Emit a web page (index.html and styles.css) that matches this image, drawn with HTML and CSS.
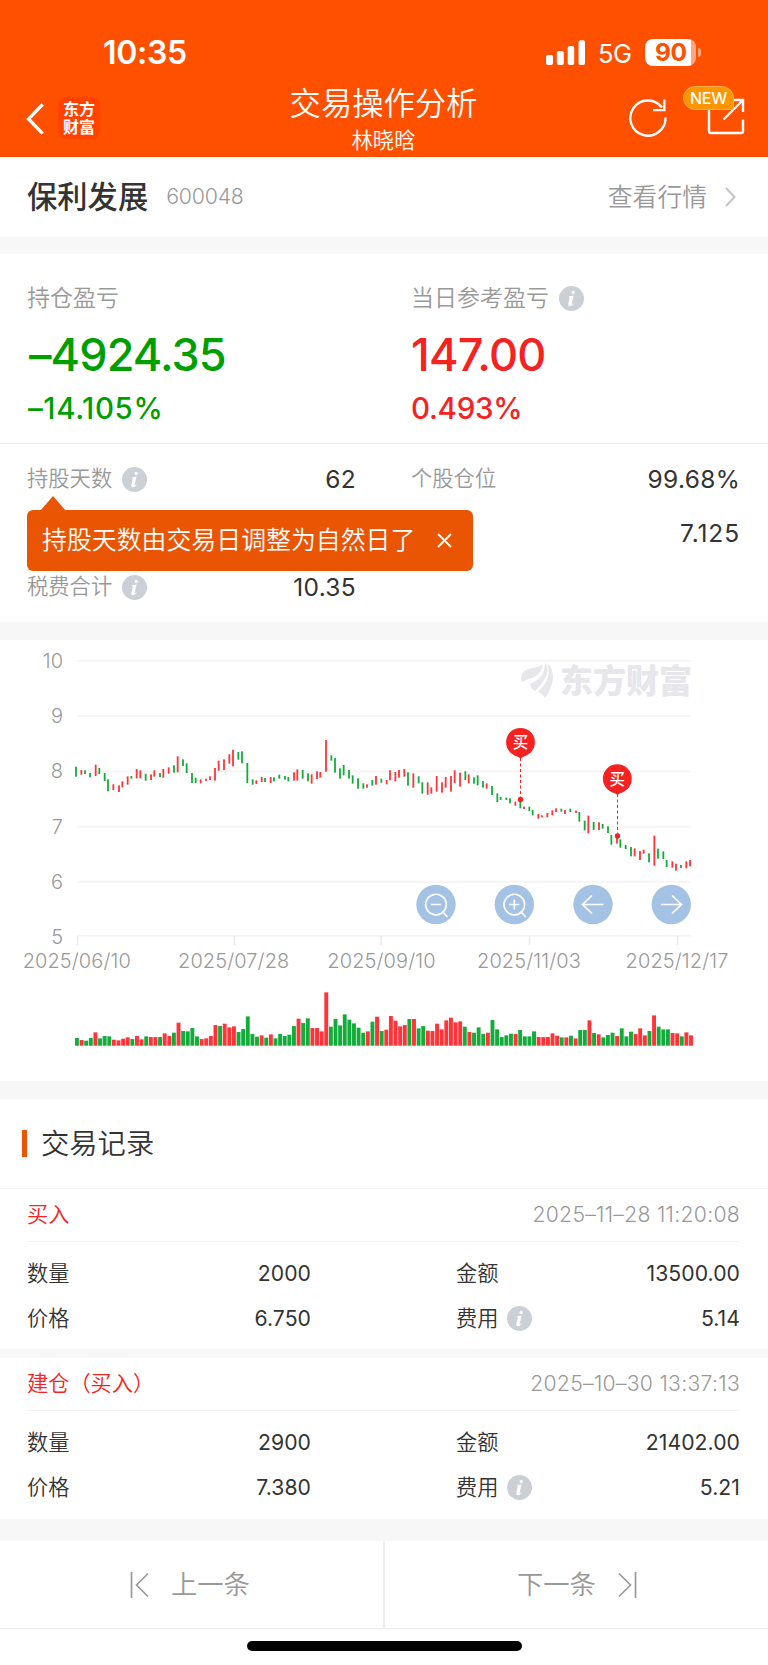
FILE: index.html
```html
<!DOCTYPE html>
<html lang="zh-CN">
<head>
<meta charset="utf-8">
<title>交易操作分析</title>
<link rel="stylesheet" href="styles.css">
</head>
<body>
<svg class="defs" aria-hidden="true">
  <symbol id="info" viewBox="0 0 25 25">
    <circle cx="12.5" cy="12.5" r="12.5" fill="#cbcfd6"/>
    <circle cx="14.2" cy="6.5" r="1.7" fill="#fff"/>
    <path d="M10.3 10.3q2-.2 4.3-.8l-2 8.5q-.3 1.300 1.600-.7l.5.5q-2 2.600-4 2.500-2-.2-1.400-2.500l1.400-5.600q.2-1-.6-1z" fill="#fff"/>
  </symbol>
</svg>
<header class="header">
  <div class="status">
    <span class="clock">10:35</span>
    <span class="status-right">
      <svg class="signal" width="39" height="25" viewBox="0 0 39 25" fill="#fff"><rect y="15" width="7" height="10" rx="2"/><rect x="10.800" y="11" width="7" height="14" rx="2"/><rect x="21.700" y="6" width="6.500" height="19" rx="2"/><rect x="32.500" y=".3" width="6.500" height="24.700" rx="2"/></svg>
      <span class="net">5G</span>
      <span class="battery"><b class="battery-level">90</b></span>
      <i class="battery-cap"></i>
    </span>
  </div>
  <div class="nav">
    <div class="nav-left">
      <svg class="back" width="18" height="32" viewBox="0 0 18 32"><path d="M15.500 2.500 2.500 16l13 13.500" fill="none" stroke="#fff" stroke-width="3.300" stroke-linecap="square"/></svg>
      <div class="brand"><span>东方</span><span>财富</span></div>
    </div>
    <div class="heading"><h1 class="heading-title">交易操作分析</h1><div class="heading-sub">林晓晗</div></div>
    <div class="nav-right">
      <svg width="40" height="40" viewBox="0 0 40 40" fill="none" stroke="#fff" stroke-width="2.400"><path d="M37.500 20.500A17.600 17.600 0 1 1 34 10.500M36.300 2.500v10.600H25"/></svg>
      <div class="share">
        <svg width="38" height="38" viewBox="0 0 38 38" fill="none" stroke="#fff" stroke-width="2.400"><path d="M2 9v24q0 2 2 2h30q2 0 2-2V21.500M26 2h10v12M36 2 16.500 21.500"/></svg>
        <span class="badge">NEW</span>
      </div>
    </div>
  </div>
</header>

<section class="stock">
  <h2 class="stock-name">保利发展</h2><span class="stock-code">600048</span>
  <span class="quote">查看行情</span>
  <svg width="13" height="22" viewBox="0 0 13 22"><path d="M2 2l8.500 9L2 20" fill="none" stroke="#c4c4c4" stroke-width="2"/></svg>
</section>

<section class="profit">
  <div class="profit-col green"><div class="label">持仓盈亏</div><div class="amount amount-hold">–4924.35</div><div class="percent percent-hold">–14.105%</div></div>
  <div class="profit-col red"><div class="label">当日参考盈亏<svg class="info"><use href="#info"/></svg></div><div class="amount">147.00</div><div class="percent">0.493%</div></div>
</section>
<section class="metrics">
  <div class="metric"><span>持股天数</span><svg class="info"><use href="#info"/></svg><b>62</b></div>
  <div class="metric"><span>个股仓位</span><b>99.68%</b></div>
  <div class="metric"></div>
  <div class="metric"><b class="cost">7.125</b></div>
  <div class="metric"><span>税费合计</span><svg class="info"><use href="#info"/></svg><b>10.35</b></div>
  <div class="tip">持股天数由交易日调整为自然日了<svg width="15" height="15" viewBox="0 0 15 15"><path d="M1 1l13 13M14 1 1 14" stroke="#fff" stroke-width="2"/></svg></div>
</section>

<section class="chart">
  <svg width="768" height="441" viewBox="0 640 768 441">
    <path class="grid" d="M77 660.700H691M77 716H691M77 771.500H691M77 826.700H691M77 881.800H691M77 935.700H691"/>
    <path class="tick" d="M77.500 936v9M234.500 936v9M381.300 936v9M529.500 936v9M677.500 936v9"/>
    <g class="axis axis-y"><text x="63" y="667.700">10</text><text x="63" y="723">9</text><text x="63" y="778.300">8</text><text x="63" y="833.500">7</text><text x="63" y="888.700">6</text><text x="63" y="943.700">5</text></g>
    <g class="axis axis-x"><text x="76.800" y="967.700">2025/06/10</text><text x="233.700" y="967.700">2025/07/28</text><text x="381.500" y="967.700">2025/09/10</text><text x="529" y="967.700">2025/11/03</text><text x="677" y="967.700">2025/12/17</text></g>
    <g class="watermark">
      <path d="M521 682q-1-12 11-14 8-1 11-4-1 10-11 14-4 1-11 4zM530 684q10-4 13-11 2-5 2-10 4 4 2 11-3 8-12 17-4-2-5-7zM538 692q9-8 10.500-17 1-6-1-11 5 3 5.500 13-.5 11-8 21-2-4-7-6z"/>
      <text x="560" y="693">东方财富</text>
    </g>
    <g id="candles"></g>
    <g id="volume"></g>
    <g class="pin"><path class="pin-line" d="M520.500 758V799"/><circle cx="520.500" cy="799.500" r="2.700"/><path d="M510.500 752 520.500 758.500 530.500 752z"/><circle cx="520.500" cy="742.300" r="14.400"/><text x="520.500" y="748">买</text></g>
    <g class="pin"><path class="pin-line" d="M617.500 794V836"/><circle cx="617.500" cy="836" r="2.700"/><path d="M607.500 788.500 617.500 795 627.500 788.500z"/><circle cx="617.300" cy="778.700" r="14.400"/><text x="617.300" y="784.500">买</text></g>
    <g class="controls">
      <circle cx="436" cy="904.500" r="19.700"/><circle cx="514.300" cy="904.500" r="19.700"/><circle cx="593" cy="904.500" r="19.700"/><circle cx="671.300" cy="904.500" r="19.700"/>
      <path d="M446.300 904.500a10.300 10.300 0 1 0-3.700 8M442.500 911.500l5 5.500M431 904.500h10M524.600 904.500a10.300 10.300 0 1 0-3.700 8M520.800 911.500l5 5.500M509.300 904.500h10M514.300 899.500v10M603.500 904.500h-20.500M592 895.500l-9.500 9 9.500 9M661 904.500h20.500M672 895.500l9.500 9-9.500 9"/>
      <path d="M446.300 904.500a10.300 10.300 0 0 1-3.700 8M524.600 904.500a10.300 10.300 0 0 1-3.700 8"/>
    </g>
  </svg>
</section>

<section class="records">
  <h3 class="records-title"><span>交易记录</span></h3>
  <article class="record">
    <div class="record-head"><span class="side">买入</span><time>2025–11–28 11:20:08</time></div>
    <div class="record-grid">
      <span>数量</span><b>2000</b><span class="second">金额</span><b>13500.00</b>
      <span>价格</span><b>6.750</b><span class="second">费用<svg class="info"><use href="#info"/></svg></span><b>5.14</b>
    </div>
  </article>
  <article class="record">
    <div class="record-head"><span class="side">建仓（买入）</span><time>2025–10–30 13:37:13</time></div>
    <div class="record-grid">
      <span>数量</span><b>2900</b><span class="second">金额</span><b>21402.00</b>
      <span>价格</span><b>7.380</b><span class="second">费用<svg class="info"><use href="#info"/></svg></span><b>5.21</b>
    </div>
  </article>
</section>

<footer class="pager">
  <div class="page-btn prev"><svg width="20" height="26" viewBox="0 0 20 26"><path d="M1.500 0v26M18 1.500 6.500 13 18 24.500"/></svg><span>上一条</span></div>
  <div class="page-btn next"><span>下一条</span><svg width="20" height="26" viewBox="0 0 20 26"><path d="M18.500 0v26M2 1.500 13.500 13 2 24.500"/></svg></div>
</footer>
<div class="home"><i></i></div>
<script src="chart.js"></script>
</body>
</html>
```
FILE: styles.css
```css
* { box-sizing: border-box; }
body { margin: 0; width: 768px; height: 1665px; background: #fff; color: #333; font-family: Inter, "Noto Sans CJK SC", sans-serif; font-weight: 350; line-height: 1; overflow: hidden; }
h1, h2, h3 { margin: 0; font-weight: inherit; }
b { font-weight: 370; }
svg { display: block; flex: none; }
.defs { position: absolute; width: 0; height: 0; }
.info { width: 25px; height: 25px; margin-left: 10px; }

.header { height: 157px; background: #ff5000; color: #fff; }
.status { height: 80px; padding: 25px 67px 0 103px; display: flex; justify-content: space-between; align-items: flex-start; }
.clock { font-size: 32px; font-weight: 600; line-height: 56px; letter-spacing: -.3px; }
.status-right { display: flex; align-items: center; height: 54px; }
.net { width: 34px; margin: 3px 13px 0 13px; font-size: 25.500px; font-weight: 400; letter-spacing: -.5px; }
.battery { width: 51px; height: 27px; border-radius: 8px; background: linear-gradient(90deg, #fff 46px, #ffa67e 46px); padding-left: 10px; }
.battery-level { color: #ff5000; font-size: 24.500px; font-weight: 700; line-height: 27px; letter-spacing: -.5px; }
.battery-cap { width: 3px; height: 9px; margin-left: 2px; border-radius: 0 4px 4px 0; background: #ffa67e; }
.nav { height: 77px; padding: 0 24px 0 26px; display: grid; grid-template-columns: 1fr auto 1fr; }
.nav-left { display: flex; gap: 14px; padding-top: 17px; }
.back { margin-top: 6px; }
.brand { width: 42px; height: 42px; border-radius: 8px; background: #ff4200; display: flex; flex-direction: column; align-items: center; justify-content: center; gap: 2px; font-size: 16px; font-weight: 700; }
.heading { text-align: center; padding-top: 8px; margin-left: -3px; }
.heading-title { font-size: 31.300px; line-height: 32px; }
.heading-sub { font-size: 21.300px; line-height: 22px; margin-top: 9px; }
.nav-right { display: flex; justify-content: flex-end; gap: 39px; padding-top: 17px; margin-right: -1px; }
.share { position: relative; padding-top: 1px; }
.badge { position: absolute; left: -24px; top: -11px; width: 51px; height: 24px; border: 1px solid #ffad4d; border-radius: 12px 12px 3px 12px; background: #ff9500; font-size: 16px; font-weight: 500; line-height: 23px; text-align: center; letter-spacing: -.3px; }

.stock { height: 80px; padding: 0 31px 0 27px; display: flex; align-items: center; }
.stock-name { font-size: 30.300px; font-weight: 500; }
.stock-code { margin-left: 18px; font-size: 21.300px; letter-spacing: -.2px; color: #999; }
.quote { margin: 0 17px 0 auto; font-size: 24.800px; color: #999; }

.profit { height: 207px; border-top: 17px solid #f7f7f7; border-bottom: 1px solid #eee; padding: 32px 27px 0; display: grid; grid-template-columns: 384px 1fr; }
.profit-col { white-space: nowrap; }
.label { display: flex; align-items: center; height: 24px; font-size: 23px; color: #999; }
.amount { margin-top: 22px; font-size: 45px; line-height: 46px; font-weight: 500; letter-spacing: -.7px; }
.amount-hold { padding-left: 2px; letter-spacing: -.9px; }
.percent { margin-top: 15px; font-size: 29.500px; line-height: 30px; font-weight: 500; letter-spacing: -.3px; }
.percent-hold { padding-left: 1px; letter-spacing: .6px; }
.green { color: #009f00; }
.red { color: #f62222; }

.metrics { position: relative; height: 178px; padding: 8px 28px 0 27px; display: grid; grid-template-columns: 329px 328px; grid-auto-rows: 54px; column-gap: 55px; }
.metrics .metric:nth-child(even) { margin-right: -1px; }
.metric { display: flex; align-items: center; font-size: 21.300px; color: #999; }
.metric b { margin-left: auto; color: #333; font-size: 24.500px; letter-spacing: .3px; }
.metric .cost { letter-spacing: .9px; }
.tip { position: absolute; left: 27px; top: 66px; width: 446px; height: 61px; padding: 0 21px 0 15px; border-radius: 6px; background: #ea5504; color: #fff; display: flex; align-items: center; justify-content: space-between; font-size: 24.900px; }
.tip::before { content: ""; position: absolute; left: 13px; top: -14px; border: solid transparent; border-width: 0 13px 15px; border-bottom-color: #ea5504; }

.chart { height: 459px; border-top: 18px solid #f7f7f7; }
.grid, .tick { fill: none; stroke: #f5f5f5; stroke-width: 2; }
.tick { stroke: #eaeaea; stroke-width: 1.500; }
.axis { font-size: 20px; fill: #999; }
.axis-y { text-anchor: end; }
.axis-x { text-anchor: middle; letter-spacing: .1px; }
.watermark { fill: #e6e6eb; font-size: 33px; font-weight: 900; }
.up { fill: #ff3338; }
.down { fill: #13ac3b; }
.pin { fill: #f62222; }
.pin text { fill: #fff; font-size: 15.500px; font-weight: 500; text-anchor: middle; }
.pin-line { stroke: #f62222; stroke-width: 1; stroke-dasharray: 3 2.500; }
.controls circle { fill: #a4c2e4; }
.controls path { fill: none; stroke: #fff; stroke-width: 1.700; }

.records-title { height: 108px; border-top: 18px solid #f7f7f7; border-bottom: 1px solid #f3f3f3; padding-left: 22px; display: flex; align-items: center; gap: 14px; font-size: 28.300px; }
.records-title::before { content: ""; width: 5px; height: 27px; background: #ea5504; }
.records-title span { padding-top: 2px; }
.record { padding: 0 28px 0 27px; height: 160px; }
.record + .record { height: 170px; border-top: 9px solid #f7f7f7; }
.record-head { height: 53px; border-bottom: 1px solid #f3f3f3; display: flex; align-items: center; justify-content: space-between; font-size: 21.200px; }
.side { color: #f62222; }
time { color: #999; letter-spacing: .28px; }
.record-grid { padding-top: 9px; display: grid; grid-template-columns: 100px 184px 230px 199px; grid-auto-rows: 45px; align-items: center; font-size: 21.200px; }
.record-grid b { text-align: right; letter-spacing: .05px; }
.second { padding-left: 145px; display: flex; align-items: center; white-space: nowrap; }
.second .info { margin-left: 9px; }

.pager { height: 110px; border-top: 22px solid #f7f7f8; border-bottom: 1px solid #eee; display: grid; grid-template-columns: 385px 1fr; }
.page-btn { display: flex; align-items: center; gap: 21px; color: #999; font-size: 26.300px; }
.page-btn span { padding-top: 2px; }
.page-btn path { fill: none; stroke: #999; stroke-width: 1.700; }
.prev { padding-left: 130px; border-right: 2px solid #eee; }
.next { padding-left: 132px; }
.home { padding-top: 12px; }
.home i { display: block; width: 275px; height: 10px; margin: 0 auto; border-radius: 5px; background: #000; }
```
FILE: chart.js
```js
// Each entry: direction (R up, G down), x, high, low. Units are thirds of a pixel, y from the chart top.
const candles = `G228 380 410,R244 390 404,G255 391 402,G270 399 412,R287 374 408,G298 384 402,G314 399 423,G324 418 454,R340 433 450,R357 436 456,R367 424 442,R383 409 434,G394 408 416,R410 387 415,R421 391 415,G437 401 422,R453 403 420,R463 391 410,G480 399 411,R490 387 413,R506 382 401,G522 376 398,R533 349 397,G549 358 378,G560 370 399,G576 399 429,G587 413 429,R602 418 430,R618 416 423,R630 409 420,R645 384 422,R656 362 392,R672 358 390,R688 343 371,R699 329 379,G715 336 359,G726 334 370,G742 369 429,G758 418 434,R769 421 432,R785 411 426,G795 414 426,R812 411 429,G822 412 424,G838 404 416,G855 408 419,G865 411 424,R882 397 422,R892 388 422,G908 390 416,G924 400 424,R935 403 431,R951 394 417,R961 396 413,R978 300 395,G994 346 362,G1005 354 398,G1020 385 416,G1031 375 406,G1047 390 416,G1058 406 431,G1074 415 446,G1090 430 446,R1101 433 443,G1117 420 437,R1128 408 434,G1144 416 428,R1160 420 433,R1170 391 421,R1186 396 424,R1197 390 413,R1213 387 410,G1224 397 437,R1240 400 443,G1256 409 430,G1267 427 461,R1283 427 464,R1294 442 461,R1310 408 455,R1326 427 458,R1337 411 443,R1353 408 455,R1364 391 429,R1380 398 440,G1396 394 420,R1406 403 430,G1422 412 431,G1433 406 436,G1449 423 443,R1460 430 446,G1476 438 465,G1492 460 486,G1502 471 480,G1519 473 480,G1530 475 490,R1546 485 497,G1561 485 505,R1572 500 507,G1588 500 513,G1598 510 526,R1615 522 536,R1626 526 532,R1642 519 532,R1657 511 526,R1668 505 516,G1684 506 515,R1695 510 522,G1711 506 516,R1728 512 519,G1738 516 545,G1754 542 571,R1765 527 580,G1781 546 570,R1797 547 570,G1808 552 566,G1824 559 579,G1834 585 614,R1851 588 611,G1861 598 623,G1877 615 627,G1893 621 649,R1904 625 649,R1920 633 660,R1931 629 641,G1947 640 667,R1963 587 677,G1974 626 656,G1990 634 657,G2000 660 681,R2017 664 683,R2028 671 692,G2043 675 684,R2059 664 685,R2070 660 679`;
// Direction and bar top, same units, measured down to the baseline at 347.
const volume = `G324 R330 G332 G324 R307 G325 G318 G319 R329 R331 R326 R322 G327 R318 R328 G319 R321 R321 G321 R310 R318 G308 R278 G303 G304 G294 G319 R327 R325 R318 R285 G288 R281 R292 R289 G306 G297 G259 G312 G320 R316 G323 R313 G325 G312 G318 G314 G288 R266 G279 G265 R294 R294 R304 R187 G290 G267 G286 G253 G269 G280 G293 G308 R304 G275 R260 G303 R299 R258 R272 R289 R285 G267 R267 G295 G288 R302 R303 R281 R298 R271 R263 R277 R274 G290 R306 G308 G292 G312 R308 G270 G298 G321 G316 G311 R312 G300 G319 G319 G304 R321 R321 R321 R310 R317 G322 R322 G317 R325 G300 G300 R271 G309 R313 G322 G315 G308 R318 G295 G319 G305 R312 R295 R316 G303 R256 G290 G298 G298 R309 R310 G319 R307 R316`;

function bar(parent, dir, x, y, width, height) {
  const r = document.createElementNS('http://www.w3.org/2000/svg', 'rect');
  r.setAttribute('class', dir === 'R' ? 'up' : 'down');
  r.setAttribute('x', x);
  r.setAttribute('y', y);
  r.setAttribute('width', width);
  r.setAttribute('height', height);
  parent.appendChild(r);
}

const candleLayer = document.getElementById('candles');
candles.split(',').forEach(c => {
  const [x, high, low] = c.slice(1).split(' ').map(n => n / 3);
  bar(candleLayer, c[0], x - 0.9, 640 + high, 1.8, low - high);
});

const volumeLayer = document.getElementById('volume');
volume.split(' ').forEach((v, i) => {
  const height = (347 - Number(v.slice(1))) / 3;
  bar(volumeLayer, v[0], 75 + i * 4.617, 1045.7 - height, 3.9, height);
});
```
